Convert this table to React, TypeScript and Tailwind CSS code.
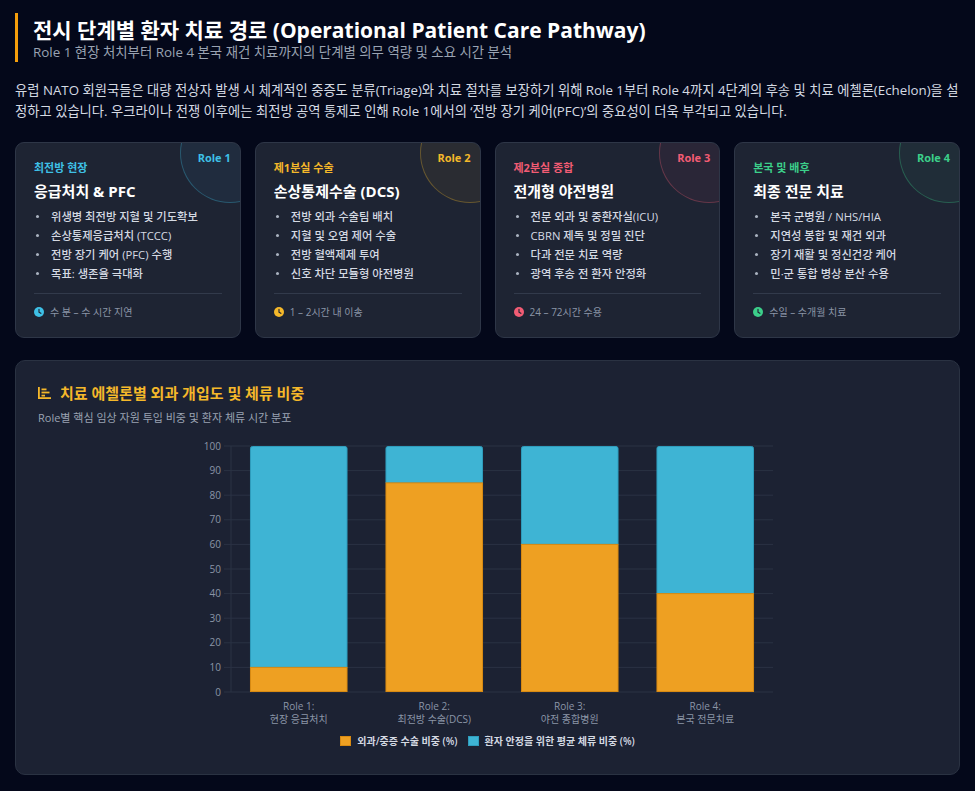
import React from 'react';

type Role = {
  role: string;
  category: string;
  title: string;
  items: string[];
  footer: string;
  text: string;
  circle: string;
  fill: string;
};

const roles: Role[] = [
  {
    role: 'Role 1',
    category: '최전방 현장',
    title: '응급처치 & PFC',
    items: ['위생병 최전방 지혈 및 기도확보', '손상통제응급처치 (TCCC)', '전방 장기 케어 (PFC) 수행', '목표: 생존율 극대화'],
    footer: '수 분 – 수 시간 지연',
    text: 'text-[#3ec0e6]',
    circle: 'border-[#3ec0e6]/30 bg-[#3ec0e6]/[0.06]',
    fill: '#3ec0e6',
  },
  {
    role: 'Role 2',
    category: '제1분실 수술',
    title: '손상통제수술 (DCS)',
    items: ['전방 외과 수술팀 배치', '지혈 및 오염 제어 수술', '전방 혈액제제 투여', '신호 차단 모듈형 야전병원'],
    footer: '1 – 2시간 내 이송',
    text: 'text-[#f5b82a]',
    circle: 'border-[#f5b82a]/30 bg-[#f5b82a]/[0.06]',
    fill: '#f5b82a',
  },
  {
    role: 'Role 3',
    category: '제2분실 종합',
    title: '전개형 야전병원',
    items: ['전문 외과 및 중환자실(ICU)', 'CBRN 제독 및 정밀 진단', '다과 전문 치료 역량', '광역 후송 전 환자 안정화'],
    footer: '24 – 72시간 수용',
    text: 'text-[#f25c74]',
    circle: 'border-[#f25c74]/30 bg-[#f25c74]/[0.06]',
    fill: '#f25c74',
  },
  {
    role: 'Role 4',
    category: '본국 및 배후',
    title: '최종 전문 치료',
    items: ['본국 군병원 / NHS/HIA', '지연성 봉합 및 재건 외과', '장기 재활 및 정신건강 케어', '민·군 통합 병상 분산 수용'],
    footer: '수일 – 수개월 치료',
    text: 'text-[#3ccf8a]',
    circle: 'border-[#3ccf8a]/30 bg-[#3ccf8a]/[0.06]',
    fill: '#3ccf8a',
  },
];

const chartData = [
  { a: 'Role 1:', b: '현장 응급처치', surgery: 10 },
  { a: 'Role 2:', b: '최전방 수술(DCS)', surgery: 85 },
  { a: 'Role 3:', b: '야전 종합병원', surgery: 60 },
  { a: 'Role 4:', b: '본국 전문치료', surgery: 40 },
];

const ORANGE = '#eea022';
const CYAN = '#3eb4d4';

const ClockIcon = ({ color }: { color: string }) => (
  <svg width="10" height="10" viewBox="0 0 12 12">
    <circle cx="6" cy="6" r="6" fill={color} />
    <path d="M6 2.8V6.2L8.2 7.6" stroke="#1e2433" strokeWidth="1.4" fill="none" strokeLinecap="round" />
  </svg>
);

const ChartIcon = () => (
  <svg width="13" height="12" viewBox="0 0 13 12" fill="#f5b82a">
    <rect x="0" y="0" width="1.8" height="12" />
    <rect x="0" y="10.2" width="13" height="1.8" />
    <rect x="3.5" y="1.5" width="5" height="1.8" />
    <rect x="3.5" y="4.6" width="8" height="1.8" />
    <rect x="3.5" y="7.7" width="3.5" height="1.8" />
  </svg>
);

const RoleCard = ({ r }: { r: Role }) => (
  <div className="relative overflow-hidden rounded-[9px] border border-[#2e3647] bg-[#1e2433] px-[18px] pt-[17px] pb-[17px]">
    <div className={`absolute -top-[40px] -right-[40px] h-[100px] w-[100px] rounded-full border ${r.circle}`}></div>
    <span className={`absolute top-[8px] right-[9px] text-[11px] leading-[14px] font-bold ${r.text}`}>{r.role}</span>
    <div className={`relative text-[11px] leading-[16px] font-bold ${r.text}`}>{r.category}</div>
    <div className="relative mt-[5px] text-[15px] leading-[20px] font-bold text-white">{r.title}</div>
    <ul className="relative mt-[6px]">
      {r.items.map((it) => (
        <li key={it} className="flex items-center text-[11.3px] leading-[19px] font-medium text-[#d5dae3]">
          <span className="ml-[2px] mr-[12px] h-[3px] w-[3px] rounded-full bg-[#aab2c0]"></span>
          {it}
        </li>
      ))}
    </ul>
    <div className="mt-[10px] border-t border-[#323a4b] pt-[10px]">
      <div className="flex items-center gap-[6px] text-[10px] leading-[16px] text-[#8b95a7]">
        <ClockIcon color={r.fill} />
        {r.footer}
      </div>
    </div>
  </div>
);

const Chart = () => {
  const left = 33;
  const right = 575;
  const top = 8;
  const bottom = 254;
  const h = bottom - top;
  const cat = (right - left) / 4;
  const bw = cat * 0.72;
  const ticks = [0, 10, 20, 30, 40, 50, 60, 70, 80, 90, 100];
  const y = (v: number) => bottom - (v / 100) * h;

  return (
    <svg width="580" height="292" viewBox="0 0 580 292" className="block">
      {ticks.map((t) => (
        <g key={t}>
          <line x1={left - 7} x2={right} y1={y(t)} y2={y(t)} stroke="#2a3244" strokeWidth="1" />
          <text x={left - 10} y={y(t) + 3.5} textAnchor="end" fontSize="10" fill="#8b95a7">
            {t}
          </text>
        </g>
      ))}
      <line x1={left} x2={left} y1={top} y2={bottom} stroke="#2a3244" strokeWidth="1" />
      {chartData.map((d, i) => {
        const cx = left + cat * (i + 0.5);
        const x = cx - bw / 2;
        return (
          <g key={d.a}>
            <path
              d={`M${x + 0.5} ${y(d.surgery)} V${top + 2.5} Q${x + 0.5} ${top + 0.5} ${x + 2.5} ${top + 0.5} H${x + bw - 2.5} Q${x + bw - 0.5} ${top + 0.5} ${x + bw - 0.5} ${top + 2.5} V${y(d.surgery)} Z`}
              fill={CYAN}
              stroke="#2f9dbd"
              strokeWidth="1"
            />
            <rect x={x + 0.5} y={y(d.surgery)} width={bw - 1} height={bottom - y(d.surgery) - 0.5} fill={ORANGE} stroke="#d88a12" strokeWidth="1" />
            <text x={cx} y={top + h + 18} textAnchor="middle" fontSize="10" fill="#8b95a7">
              {d.a}
            </text>
            <text x={cx} y={top + h + 31} textAnchor="middle" fontSize="10" fill="#8b95a7">
              {d.b}
            </text>
          </g>
        );
      })}
    </svg>
  );
};

export default function App() {
  return (
    <div className="min-h-[791px] bg-[#04081a] px-[15px] pt-[13px] pb-[18px] font-['Open_Sans','Noto_Sans_CJK_KR',sans-serif]">
      {/* Header */}
      <header className="border-l-[3px] border-[#f59e0b] pl-[15px] pt-[3px] pb-[2px]">
        <h1 className="text-[21px] leading-[28px] font-bold text-white">
          전시 단계별 환자 치료 경로 (Operational Patient Care Pathway)
        </h1>
        <p className="text-[13.4px] leading-[16px] text-[#9aa3b2]">
          Role 1 현장 처치부터 Role 4 본국 재건 치료까지의 단계별 의무 역량 및 소요 시간 분석
        </p>
      </header>

      <p className="mt-[18px] text-[13.3px] leading-[21px] text-[#d5dae3]">
        유럽 NATO 회원국들은 대량 전상자 발생 시 체계적인 중증도 분류(Triage)와 치료 절차를 보장하기 위해 Role 1부터 Role 4까지 4단계의 후송 및 치료 에첼론(Echelon)을 설정하고 있습니다. 우크라이나 전쟁 이후에는 최전방 공역 통제로 인해 Role 1에서의 ‘전방 장기 케어(PFC)’의 중요성이 더욱 부각되고 있습니다.
      </p>

      {/* Role cards */}
      <div className="mt-[20px] grid grid-cols-4 gap-[14px]">
        {roles.map((r) => (
          <RoleCard key={r.role} r={r} />
        ))}
      </div>

      {/* Chart */}
      <section className="mt-[22px] rounded-[10px] border border-[#2a3242] bg-[#1c2233] px-[22px] pt-[22px] pb-[25px]">
        <div className="flex items-center gap-[9px]">
          <ChartIcon />
          <h2 className="text-[15px] leading-[20px] font-bold text-[#f5b82a]">치료 에첼론별 외과 개입도 및 체류 비중</h2>
        </div>
        <p className="mt-[7px] text-[11px] leading-[16px] text-[#9aa3b2]">Role별 핵심 임상 자원 투입 비중 및 환자 체류 시간 분포</p>
        <div className="mx-auto mt-[12px] w-[580px]">
          <Chart />
          <div className="mt-[3px] flex items-center justify-center gap-[10px] text-[10px] leading-[16px] font-semibold text-[#d5dae3]">
            <div className="flex items-center gap-[6px]">
              <span className="h-[10px] w-[11px] border border-[#d88a12] bg-[#eea022]"></span>
              외과/중증 수술 비중 (%)
            </div>
            <div className="flex items-center gap-[6px]">
              <span className="h-[10px] w-[11px] border border-[#2f9dbd] bg-[#3eb4d4]"></span>
              환자 안정을 위한 평균 체류 비중 (%)
            </div>
          </div>
        </div>
      </section>
    </div>
  );
}
